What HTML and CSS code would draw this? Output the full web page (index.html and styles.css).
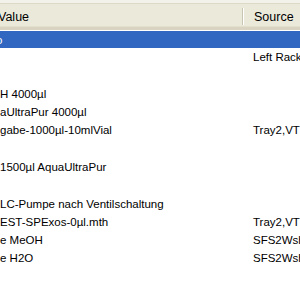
FILE: index.html
```html
<!DOCTYPE html>
<html lang="en">
<head>
	<meta charset="UTF-8">
	<title>Method list</title>
	<link rel="stylesheet" href="styles.css">
</head>
<body>
	<div class="listview">
		<div class="lv-top"></div>
		<div class="lv-header">
			<div class="lv-col lv-col-value">Value</div>
			<div class="lv-col lv-col-source">Source</div>
		</div>
		<div class="lv-body">
			<div class="lv-row selected"><span class="cell cut">o</span><span class="cell src"></span></div>
			<div class="lv-row"><span class="cell"></span><span class="cell src">Left Rack</span></div>
			<div class="lv-row"><span class="cell"></span><span class="cell src"></span></div>
			<div class="lv-row"><span class="cell">H 4000µl</span><span class="cell src"></span></div>
			<div class="lv-row"><span class="cell">aUltraPur 4000µl</span><span class="cell src"></span></div>
			<div class="lv-row"><span class="cell">gabe-1000µl-10mlVial</span><span class="cell src">Tray2,VT1</span></div>
			<div class="lv-row"><span class="cell"></span><span class="cell src"></span></div>
			<div class="lv-row"><span class="cell">1500µl AquaUltraPur</span><span class="cell src"></span></div>
			<div class="lv-row"><span class="cell"></span><span class="cell src"></span></div>
			<div class="lv-row"><span class="cell wide">LC-Pumpe nach Ventilschaltung</span><span class="cell src"></span></div>
			<div class="lv-row"><span class="cell">EST-SPExos-0µl.mth</span><span class="cell src">Tray2,VT1</span></div>
			<div class="lv-row"><span class="cell">e MeOH</span><span class="cell src">SFS2Wsh1</span></div>
			<div class="lv-row"><span class="cell">e H2O</span><span class="cell src">SFS2Wsh2</span></div>
		</div>
	</div>
</body>
</html>
```

FILE: styles.css
```css
html, body {
	margin: 0;
	padding: 0;
	background: #ffffff;
}
.listview {
	width: 300px;
	height: 300px;
	overflow: hidden;
	font-family: "Liberation Sans", Arial, sans-serif;
	font-size: 11.5px;
	color: #000;
}
.lv-top {
	height: 3px;
	background: #f3f2ea;
	border-bottom: 1px solid #dcd9c8;
}
.lv-header {
	display: grid;
	grid-template-columns: 243px 1fr;
	height: 23px;
	background: #ebe9da;
	border-bottom: 3px solid #d8d4c1;
	box-shadow: inset 0 -1px 0 #e2dfcd;
}
.lv-col {
	display: flex;
	align-items: center;
	white-space: nowrap;
	overflow: hidden;
	font-size: 12.5px;
	padding-top: 2px;
}
.lv-col-value {
	text-indent: -2px;
	border-right: 1px solid #c9c6b3;
	box-shadow: 1px 0 0 #ffffff;
	margin: 4px 0 2px;
	padding-top: 0;
}
.lv-col-source {
	padding-left: 11px;
}
.lv-body {
	padding-top: 1px;
}
.lv-row {
	display: grid;
	grid-template-columns: 252px 1fr;
	height: 18.3px;
	align-items: center;
	white-space: nowrap;
}
.lv-row.selected {
	background: #3166c1;
	color: #ffffff;
	height: 17px;
}
.cell {
	overflow: visible;
}
.cell.cut {
	text-indent: -4px;
	overflow: hidden;
}
.cell.src {
	padding-left: 1px;
}
```
